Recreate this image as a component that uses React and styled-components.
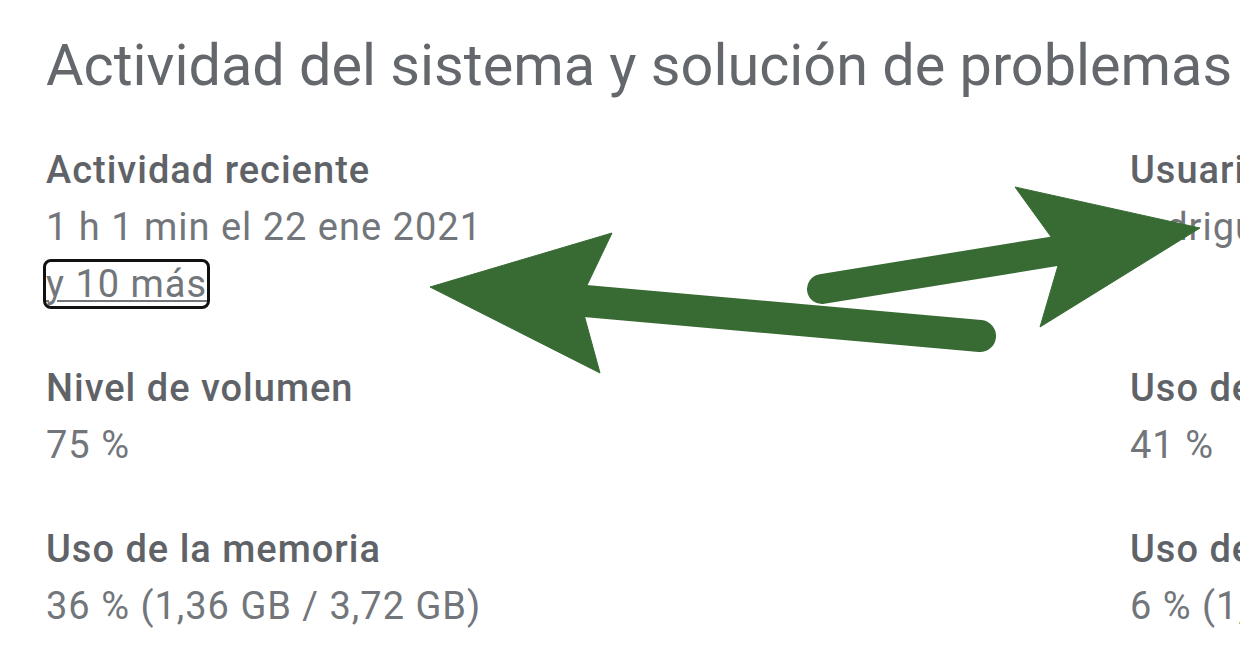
import React from "react";
import styled, { createGlobalStyle } from "styled-components";

const GlobalStyle = createGlobalStyle`
  html, body {
    margin: 0;
    padding: 0;
    background: #ffffff;
    overflow: hidden;
  }
  body {
    font-family: Roboto, "Noto Sans", "Liberation Sans", sans-serif;
  }
`;

const StPage = styled.div`
  position: relative;
  width: 1240px;
  height: 655px;
  overflow: hidden;
  padding: 32px 0 0 46px;
  box-sizing: border-box;
`;

const StTitle = styled.h1`
  margin: 0 0 42px 0;
  font-size: 57.6px;
  line-height: 68px;
  font-weight: 400;
  color: #64686d;
  white-space: nowrap;
`;

const StGrid = styled.div`
  display: grid;
  grid-template-columns: 1084px 400px;
  row-gap: 47px;
`;

const StItem = styled.div`
  display: flex;
  flex-direction: column;
  white-space: nowrap;
`;

const StLabel = styled.div`
  font-size: 38px;
  line-height: 57px;
  letter-spacing: 1px;
  font-weight: 500;
  color: #5f6368;
`;

const StValue = styled.div`
  font-size: 38px;
  line-height: 57px;
  letter-spacing: 1px;
  font-weight: 400;
  color: #72767b;
`;

const StLink = styled.a`
  color: #72767b;
  text-decoration: underline;
  text-decoration-thickness: 2px;
  text-underline-offset: 3px;
  outline: 3px solid #111111;
  border-radius: 5px;
`;

const StArrows = styled.svg`
  position: absolute;
  left: 0;
  top: 0;
  pointer-events: none;
`;

const rows = [
  [
    { label: "Actividad reciente", value: "1 h 1 min el 22 ene 2021", more: "y 10 más" },
    { label: "Usuarios recientes", value: "rodriguez@ejemplo.com" },
  ],
  [
    { label: "Nivel de volumen", value: "75 %" },
    { label: "Uso de la CPU", value: "41 %" },
  ],
  [
    { label: "Uso de la memoria", value: "36 % (1,36 GB / 3,72 GB)" },
    { label: "Uso del almacenamiento", value: "6 % (1,9 GB / 32 GB)" },
  ],
];

const Item = ({ label, value, more }) => (
  <StItem>
    <StLabel>{label}</StLabel>
    <StValue>{value}</StValue>
    {more && (
      <StValue>
        <StLink href="#">{more}</StLink>
      </StValue>
    )}
  </StItem>
);

const App = () => {
  return (
    <>
      <GlobalStyle />
      <StPage>
        <StTitle>Actividad del sistema y solución de problemas</StTitle>
        <StGrid>
          {rows.map((row, i) =>
            row.map((item, j) => <Item key={`${i}-${j}`} {...item} />)
          )}
        </StGrid>
        <StArrows width="1240" height="655" viewBox="0 0 1240 655">
          <g fill="#386b34" stroke="#386b34">
            <line x1="585" y1="301" x2="980" y2="336" strokeWidth="32" strokeLinecap="round" />
            <polygon points="430,287 612,233 580,300 600,373" strokeWidth="1" />
            <line x1="822" y1="289" x2="1075" y2="248" strokeWidth="30" strokeLinecap="round" />
            <polygon points="1200,228 1015,187 1062,252 1040,327" strokeWidth="1" />
          </g>
        </StArrows>
      </StPage>
    </>
  );
};

export default App;
